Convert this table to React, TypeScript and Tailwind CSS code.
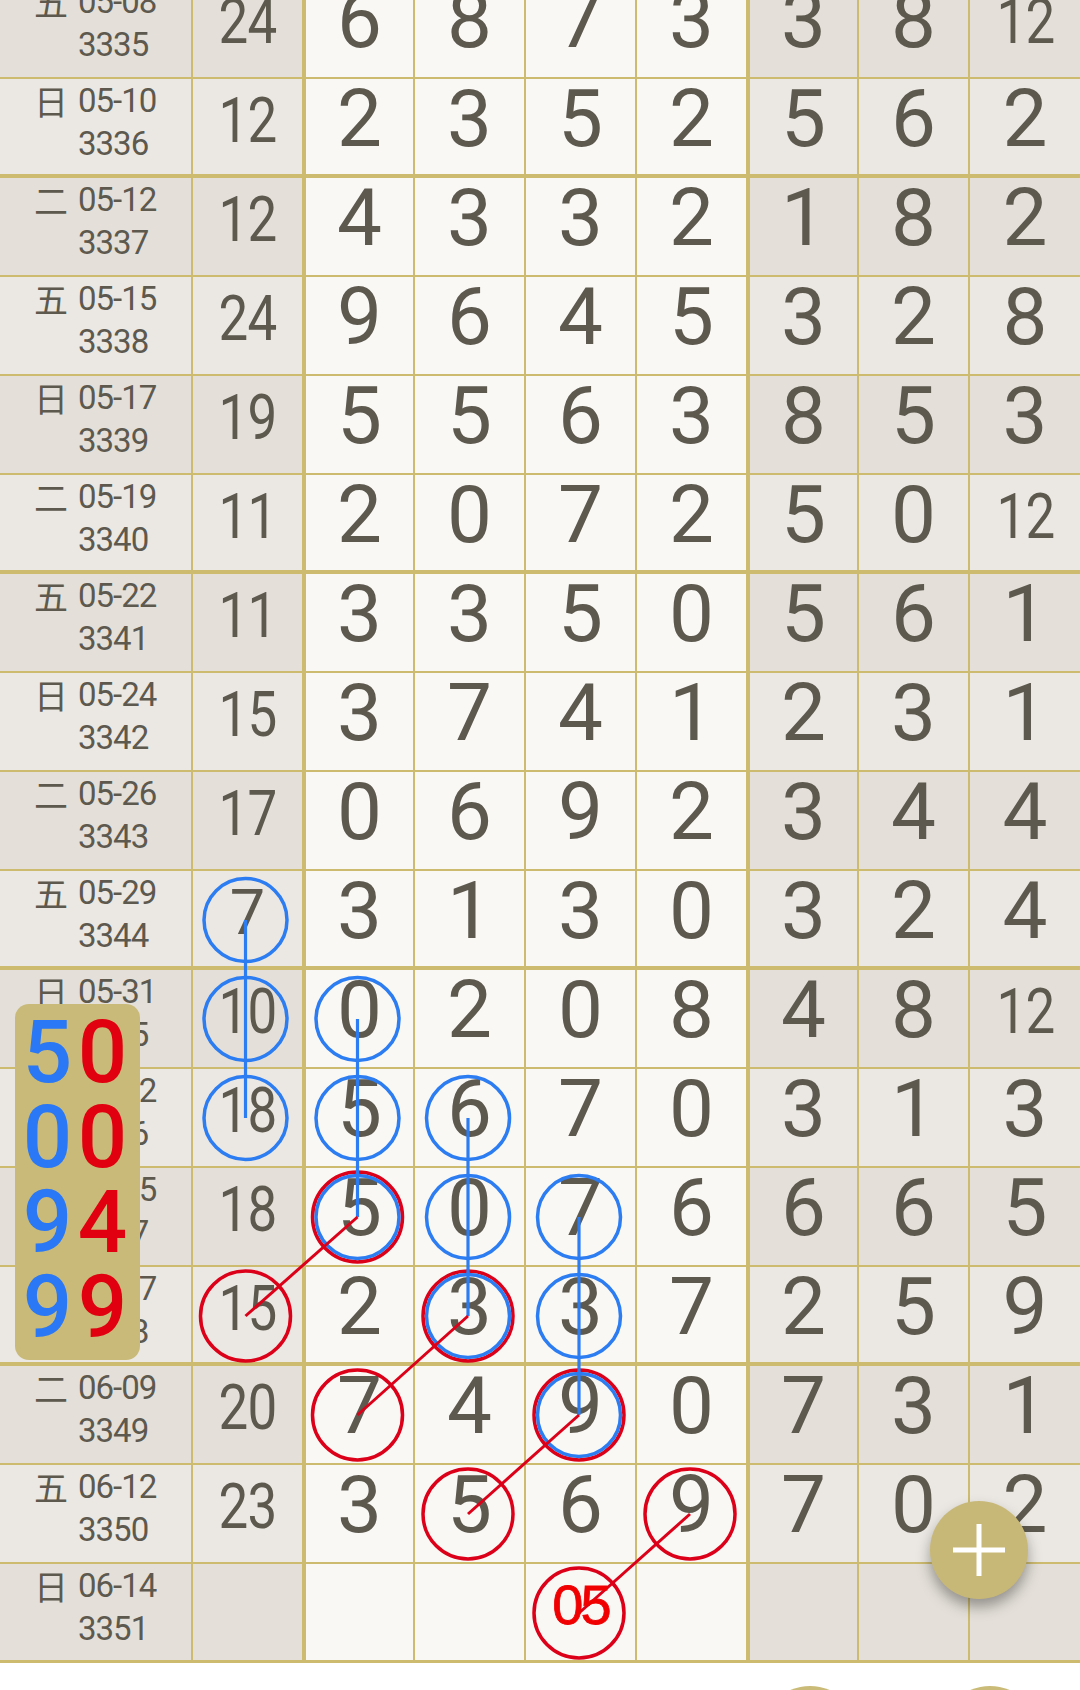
import React from "react";

type Row = { w: string; d: string; n: string; s: string; a: string[]; b: string[] };

const data: Row[] = [
  { w: "五", d: "05-08", n: "3335", s: "24", a: ["6", "8", "7", "3"], b: ["3", "8", "12"] },
  { w: "日", d: "05-10", n: "3336", s: "12", a: ["2", "3", "5", "2"], b: ["5", "6", "2"] },
  { w: "二", d: "05-12", n: "3337", s: "12", a: ["4", "3", "3", "2"], b: ["1", "8", "2"] },
  { w: "五", d: "05-15", n: "3338", s: "24", a: ["9", "6", "4", "5"], b: ["3", "2", "8"] },
  { w: "日", d: "05-17", n: "3339", s: "19", a: ["5", "5", "6", "3"], b: ["8", "5", "3"] },
  { w: "二", d: "05-19", n: "3340", s: "11", a: ["2", "0", "7", "2"], b: ["5", "0", "12"] },
  { w: "五", d: "05-22", n: "3341", s: "11", a: ["3", "3", "5", "0"], b: ["5", "6", "1"] },
  { w: "日", d: "05-24", n: "3342", s: "15", a: ["3", "7", "4", "1"], b: ["2", "3", "1"] },
  { w: "二", d: "05-26", n: "3343", s: "17", a: ["0", "6", "9", "2"], b: ["3", "4", "4"] },
  { w: "五", d: "05-29", n: "3344", s: "7", a: ["3", "1", "3", "0"], b: ["3", "2", "4"] },
  { w: "日", d: "05-31", n: "3345", s: "10", a: ["0", "2", "0", "8"], b: ["4", "8", "12"] },
  { w: "二", d: "06-02", n: "3346", s: "18", a: ["5", "6", "7", "0"], b: ["3", "1", "3"] },
  { w: "五", d: "06-05", n: "3347", s: "18", a: ["5", "0", "7", "6"], b: ["6", "6", "5"] },
  { w: "日", d: "06-07", n: "3348", s: "15", a: ["2", "3", "3", "7"], b: ["2", "5", "9"] },
  { w: "二", d: "06-09", n: "3349", s: "20", a: ["7", "4", "9", "0"], b: ["7", "3", "1"] },
  { w: "五", d: "06-12", n: "3350", s: "23", a: ["3", "5", "6", "9"], b: ["7", "0", "2"] },
  { w: "日", d: "06-14", n: "3351", s: "", a: ["", "", "", ""], b: ["", "", ""] },
];

const ROW0 = -20;
const PITCH = 99;
const rc = (k: number) => ROW0 + PITCH * k + 49;
const COL = [245.5, 357.5, 468, 579, 690];

const blueCircles: [number, number][] = [
  [0, 9], [0, 10], [0, 11],
  [1, 10], [1, 11], [1, 12],
  [2, 11], [2, 12], [2, 13],
  [3, 12], [3, 13], [3, 14],
];
const blueLines: [number, number, number][] = [
  [0, 9, 11],
  [1, 10, 12],
  [2, 11, 13],
  [3, 12, 14],
];
const redCircles: [number, number][] = [
  [0, 13], [1, 12], [1, 14], [2, 13], [2, 15], [3, 14], [4, 15], [3, 16],
];
const redLines: [number, number, number, number][] = [
  [0, 13, 1, 12],
  [1, 14, 2, 13],
  [2, 15, 3, 14],
  [4, 15, 3, 16],
];

function Cell({
  children,
  bg,
  bottom,
  right,
  kind,
}: {
  children?: React.ReactNode;
  bg: string;
  bottom: string;
  right: string;
  kind: string;
}) {
  return <div className={`h-[99px] border-[#cdbb70] ${bg} ${bottom} ${right} ${kind}`}>{children}</div>;
}

function Num({ v }: { v: string }) {
  if (v.length > 1) {
    return <span className="inline-block scale-x-[0.84] tracking-[-1px]">{v}</span>;
  }
  return <>{v}</>;
}

export default function App() {
  return (
    <div className="relative w-[1080px] h-[1690px] overflow-hidden bg-white text-[#5d594f] font-['Roboto',sans-serif]">
      <div className="mt-[-20px] grid grid-cols-[193px_113px_109px_111px_111px_113px_109px_111px_110px]">
        {data.map((r, k) => {
          const dark = k % 2 === 0;
          const side = dark ? "bg-[#e4e0d9]" : "bg-[#ebe8e3]";
          const mid = "bg-[#f9f8f5]";
          const bottom =
            k === 16 ? "border-b-[3px]" : k === 1 || k === 5 || k === 9 || k === 13 ? "border-b-4" : "border-b-2";
          return (
            <React.Fragment key={r.n}>
              <Cell bg={side} bottom={bottom} right="border-r-2" kind="flex items-start pl-[34px]">
                <span className="w-[34px] text-center font-['Noto_Sans_CJK_SC',sans-serif] text-[34px] leading-[43px]">
                  {r.w}
                </span>
                <div className="ml-[10px] flex flex-col text-[33px] leading-[43px] tracking-[-1px]">
                  <span>{r.d}</span>
                  <span>{r.n}</span>
                </div>
              </Cell>
              <Cell bg={side} bottom={bottom} right="border-r-4" kind="text-center text-[63px] leading-none pt-[10px]">
                <Num v={r.s} />
              </Cell>
              {r.a.map((v, i) => (
                <Cell
                  key={i}
                  bg={mid}
                  bottom={bottom}
                  right={i === 3 ? "border-r-4" : "border-r-2"}
                  kind="text-center text-[80px] leading-none"
                >
                  {v}
                </Cell>
              ))}
              {r.b.map((v, i) => (
                <Cell
                  key={"b" + i}
                  bg={side}
                  bottom={bottom}
                  right={i === 2 ? "border-r-0" : "border-r-2"}
                  kind={
                    v.length > 1
                      ? "text-center text-[63px] leading-none pt-[10px]"
                      : "text-center text-[80px] leading-none"
                  }
                >
                  <Num v={v} />
                </Cell>
              ))}
            </React.Fragment>
          );
        })}
      </div>

      {/* footer peeking buttons */}
      <div className="flex h-[30px] gap-[80px] overflow-hidden pl-[760px] pt-[23px]">
        <div className="h-[100px] w-[100px] shrink-0 rounded-full bg-[#cbbb78]" />
        <div className="h-[100px] w-[100px] shrink-0 rounded-full bg-[#cbbb78]" />
      </div>

      {/* drawn overlay */}
      <svg
        className="pointer-events-none absolute left-0 top-0"
        width="1080"
        height="1690"
        viewBox="0 0 1080 1690"
      >
        {redCircles.map(([c, k], i) => (
          <circle key={"rc" + i} cx={COL[c]} cy={rc(k)} r={45} fill="none" stroke="#dc0018" strokeWidth={3.5} />
        ))}
        {blueCircles.map(([c, k], i) => (
          <circle key={"bc" + i} cx={COL[c]} cy={rc(k)} r={41.5} fill="none" stroke="#2c7cf2" strokeWidth={3.5} />
        ))}
        {blueLines.map(([c, k1, k2], i) => (
          <line key={"bl" + i} x1={COL[c]} y1={rc(k1)} x2={COL[c]} y2={rc(k2)} stroke="#2c7cf2" strokeWidth={3.2} />
        ))}
        {redLines.map(([c1, k1, c2, k2], i) => (
          <line key={"rl" + i} x1={COL[c1]} y1={rc(k1)} x2={COL[c2]} y2={rc(k2)} stroke="#dc0018" strokeWidth={3} />
        ))}
      </svg>

      {/* predicted number in last row */}
      <div className="absolute left-[526px] top-[1564px] w-[109px] pt-[13px] text-center font-['Liberation_Sans',sans-serif] text-[56px] leading-none tracking-[-3px] text-[#f00000] [-webkit-text-stroke:0.8px_#f00000]">
        05
      </div>

      {/* left summary box */}
      <div className="absolute left-[15px] top-[1004px] h-[356px] w-[125px] rounded-[14px] bg-[#c9ba79] pl-[5px] pt-[6px] text-[87px] font-medium leading-[85px]">
        {[
          ["5", "0"],
          ["0", "0"],
          ["9", "4"],
          ["9", "9"],
        ].map(([a, b], i) => (
          <div key={i} className="flex">
            <span className="w-[55px] text-center text-[#2a78f5]">{a}</span>
            <span className="w-[55px] text-center text-[#e1000f]">{b}</span>
          </div>
        ))}
      </div>

      {/* floating action button */}
      <div className="absolute left-[930px] top-[1501px] flex h-[98px] w-[98px] items-center justify-center rounded-full bg-[#c8b877] shadow-[0_8px_14px_rgba(0,0,0,0.35)]">
        <svg width="52" height="52" viewBox="0 0 52 52">
          <line x1="0" y1="26" x2="52" y2="26" stroke="white" strokeWidth="5" />
          <line x1="26" y1="0" x2="26" y2="52" stroke="white" strokeWidth="5" />
        </svg>
      </div>
    </div>
  );
}
